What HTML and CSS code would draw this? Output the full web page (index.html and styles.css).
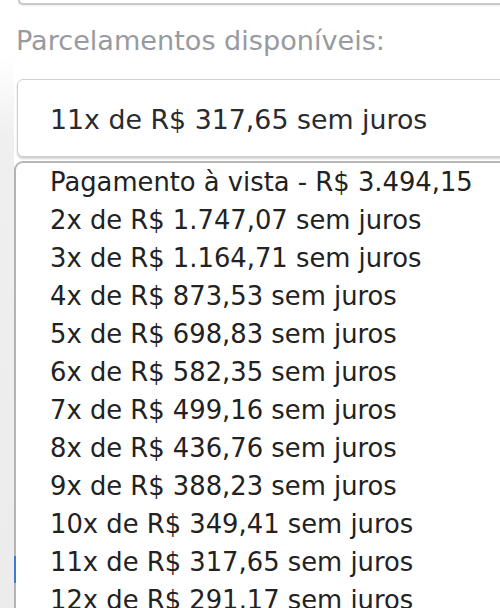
FILE: index.html
```html
<!DOCTYPE html>
<html lang="pt-BR">
<head>
  <meta charset="UTF-8"/>
  <meta name="viewport" content="width=device-width, initial-scale=1.0"/>
  <title>Parcelamentos</title>
  <link rel="stylesheet" href="styles.css">
</head>
<body>

  <div class="page">
    <div class="gutter"></div>

    <div class="form-col">
      <div class="prev-field"></div>

      <label class="field-label" for="parcelas">Parcelamentos disponíveis:</label>

      <div class="select-box" id="parcelas">11x de R$ 317,65 sem juros</div>

      <ul class="option-list">
        <li>Pagamento à vista - R$ 3.494,15</li>
        <li>2x de R$ 1.747,07 sem juros</li>
        <li>3x de R$ 1.164,71 sem juros</li>
        <li>4x de R$ 873,53 sem juros</li>
        <li>5x de R$ 698,83 sem juros</li>
        <li>6x de R$ 582,35 sem juros</li>
        <li>7x de R$ 499,16 sem juros</li>
        <li>8x de R$ 436,76 sem juros</li>
        <li>9x de R$ 388,23 sem juros</li>
        <li>10x de R$ 349,41 sem juros</li>
        <li class="selected">11x de R$ 317,65 sem juros</li>
        <li>12x de R$ 291,17 sem juros</li>
      </ul>
    </div>
  </div>

</body>
</html>
```

FILE: styles.css
```css
body {
  margin: 0;
  background-color: #fff;
  font-family: 'DejaVu Sans', Verdana, sans-serif;
  overflow: hidden;
  height: 608px;
}

.page {
  display: flex;
  height: 608px;
}

.gutter {
  width: 14px;
  flex-shrink: 0;
  background: linear-gradient(to bottom, #fff 0, #fff 55px, #efefef 140px, #ececec 100%);
}

.form-col {
  flex: 1;
  min-width: 0;
}

.prev-field {
  margin-left: 4px;
  margin-right: -20px;
  height: 3px;
  border-left: 2px solid #c8c8c8;
  border-bottom: 2px solid #c8c8c8;
  border-bottom-left-radius: 8px;
  box-shadow: 0 1px 2px rgba(0, 0, 0, 0.08);
}

.field-label {
  display: block;
  margin-top: 20px;
  margin-left: 2px;
  font-size: 27.1px;
  line-height: 32px;
  color: #979aa0;
}

.select-box {
  margin-top: 22px;
  margin-left: 3px;
  margin-right: -20px;
  padding: 24px 0 20px 32px;
  font-size: 26.8px;
  line-height: 32px;
  color: #2a2a30;
  background-color: #fff;
  border: 1px solid #cfcfcf;
  border-radius: 6px;
  box-shadow: 0 2px 2px rgba(0, 0, 0, 0.18);
}

.option-list {
  list-style: none;
  margin: 4px -20px 0 0;
  padding: 0 0 0 34px;
  background-color: #fff;
  border-top: 2px solid #b8b8b8;
  border-left: 2px solid #b4b4b4;
  border-top-left-radius: 9px;
}

.option-list li {
  position: relative;
  font-size: 25.8px;
  line-height: 38px;
  color: #222;
  white-space: nowrap;
}

.option-list li.selected::before {
  content: "";
  position: absolute;
  left: -36px;
  top: 13px;
  width: 2px;
  height: 27px;
  background-color: #3a7bd5;
}
```
